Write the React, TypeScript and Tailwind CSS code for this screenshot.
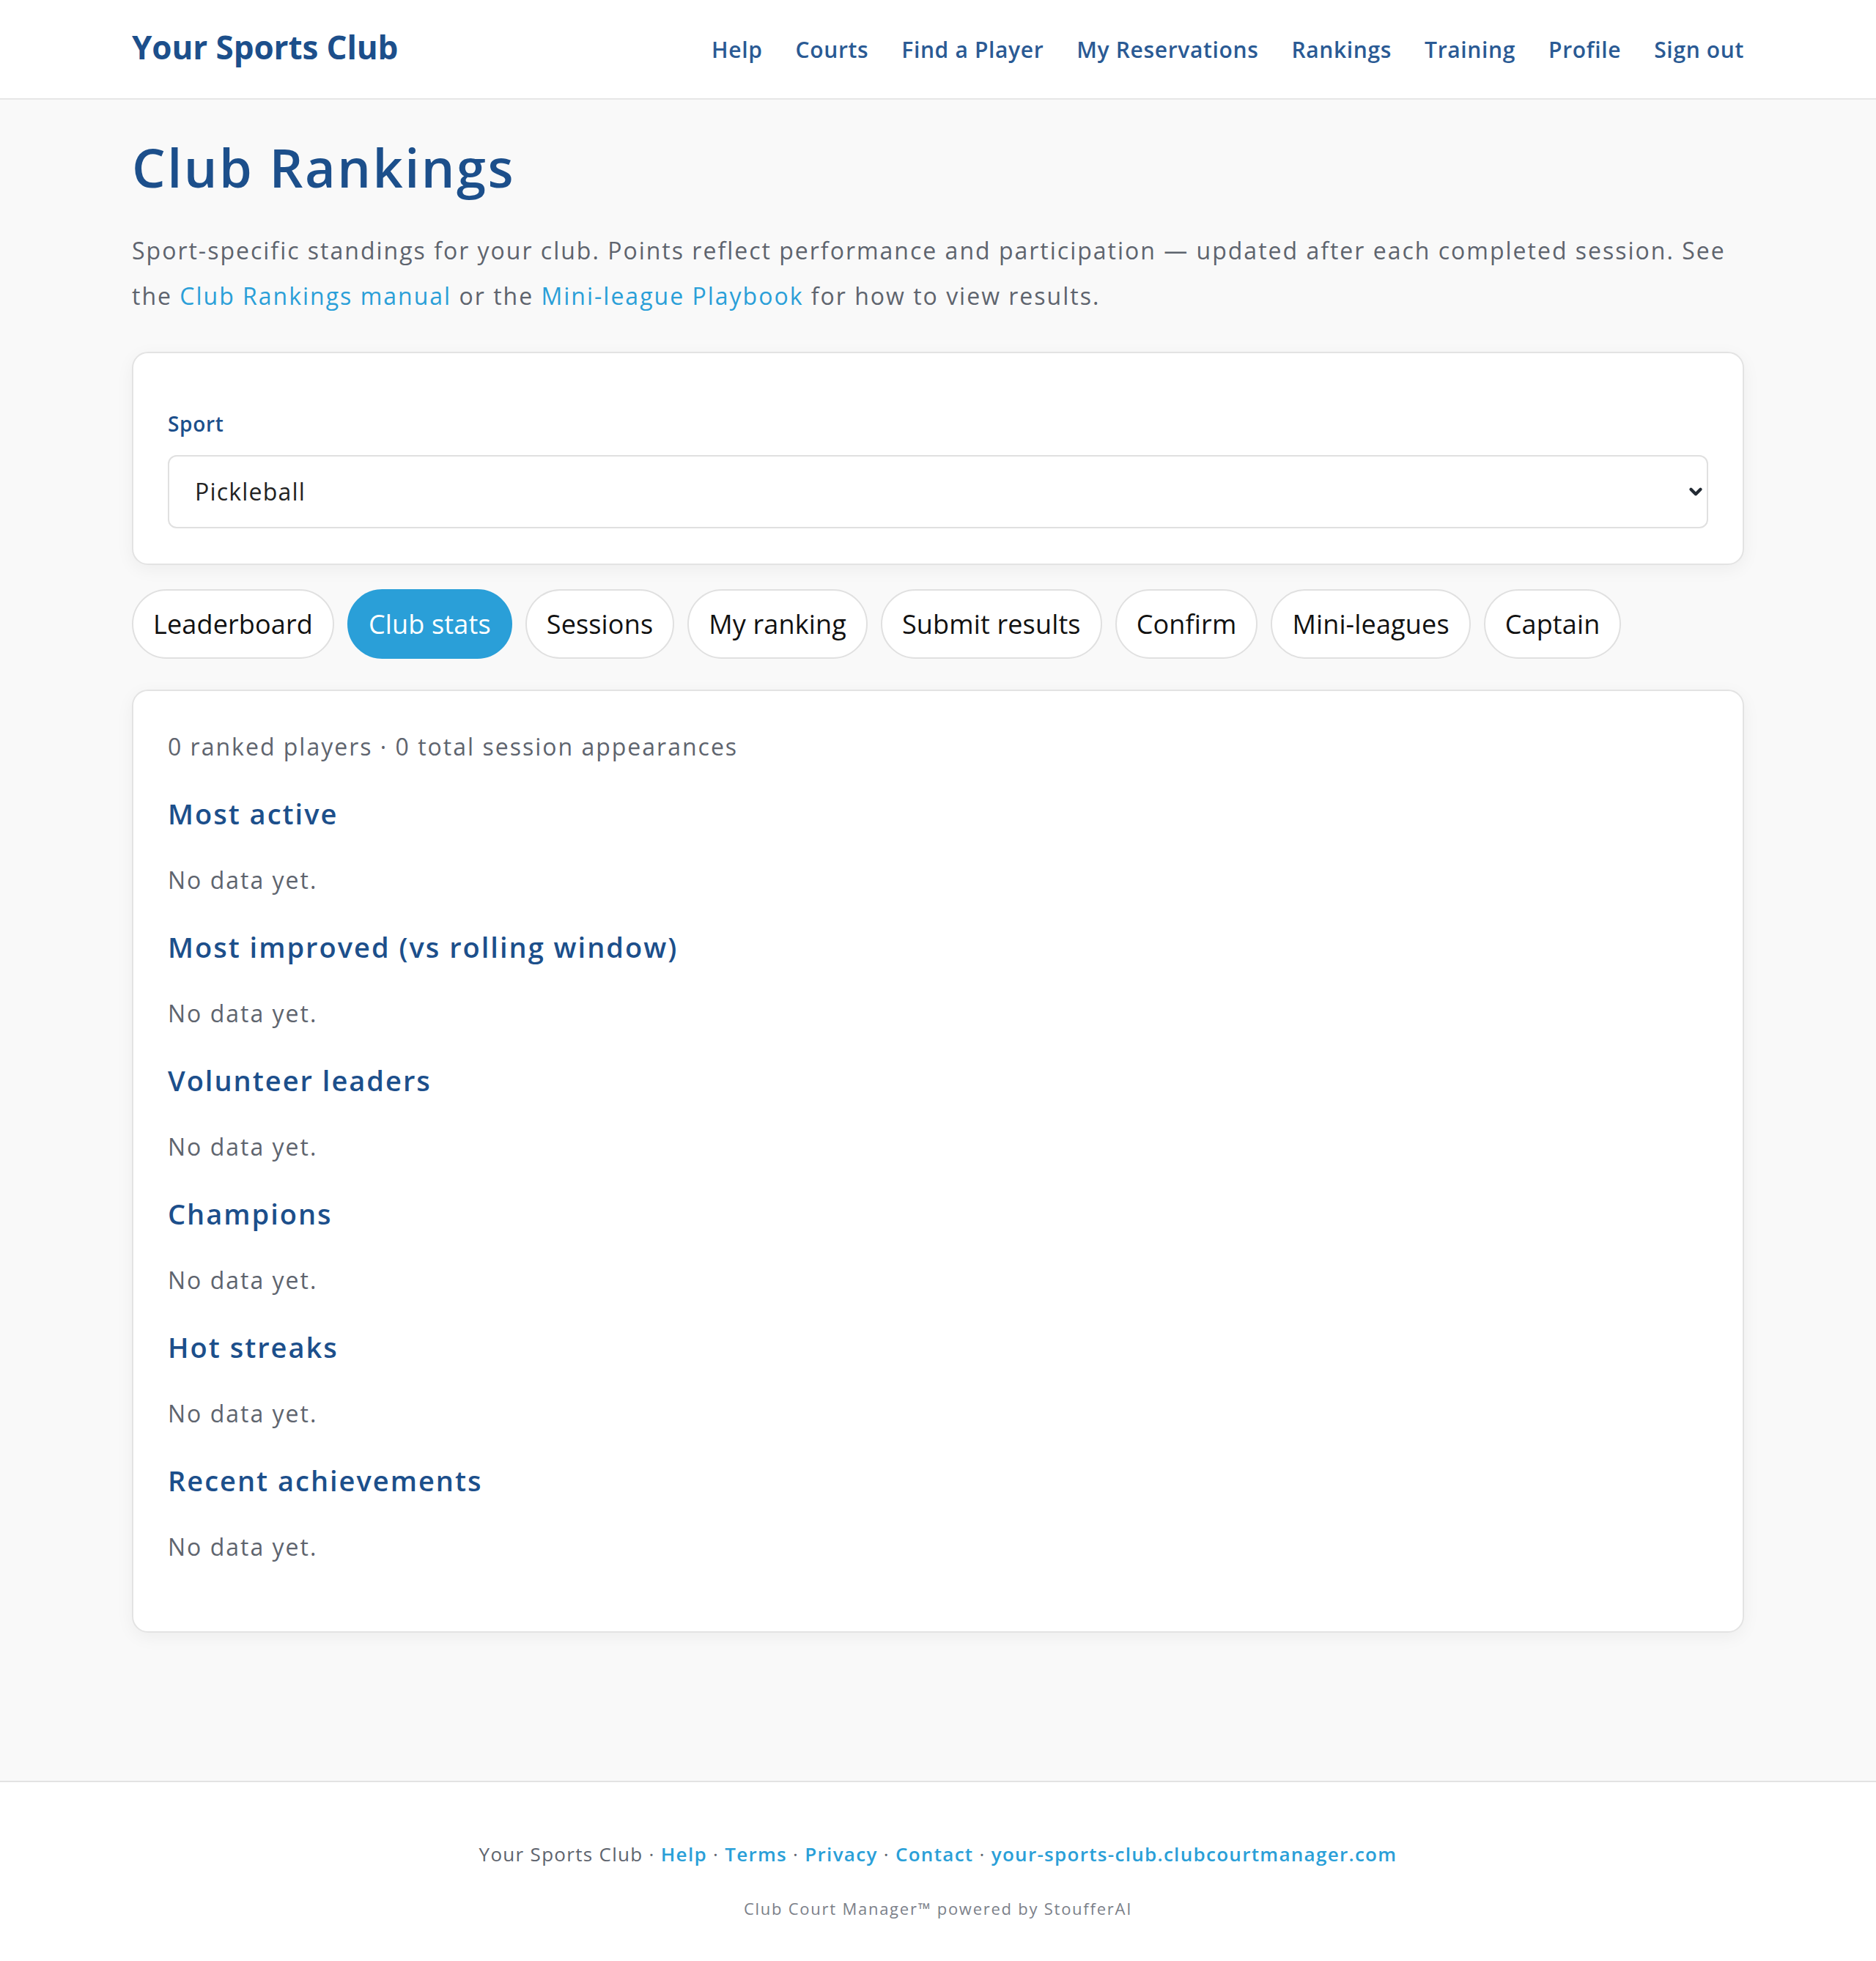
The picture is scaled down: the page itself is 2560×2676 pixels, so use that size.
import { ChevronDown } from "lucide-react";

const navLinks = ["Help", "Courts", "Find a Player", "My Reservations", "Rankings", "Training", "Profile", "Sign out"];

const tabs = ["Leaderboard", "Club stats", "Sessions", "My ranking", "Submit results", "Confirm", "Mini-leagues", "Captain"];

const statSections = [
  "Most active",
  "Most improved (vs rolling window)",
  "Volunteer leaders",
  "Champions",
  "Hot streaks",
  "Recent achievements",
];

const footerLinks = ["Help", "Terms", "Privacy", "Contact", "your-sports-club.clubcourtmanager.com"];

const ClubRankings = () => {
  const activeTab = "Club stats";

  return (
    <div className="min-h-screen bg-[#f9f9f9] font-['Open_Sans','Noto_Sans',sans-serif]">
      {/* Top bar */}
      <header className="h-[136px] border-b-2 border-[#e6e6e6] bg-white">
        <div className="mx-auto flex h-full max-w-[2200px] items-center justify-between">
          <a href="#" className="-mt-[6px] text-[44px] font-bold tracking-[-0.1px] text-[#1c4f8b]">
            Your Sports Club
          </a>
          <nav className="flex items-center gap-[45px] text-[30px] font-semibold tracking-[0.65px] text-[#2a5a94]">
            {navLinks.map((link) => (
              <a key={link} href="#">
                {link}
              </a>
            ))}
          </nav>
        </div>
      </header>

      <main className="mx-auto max-w-[2200px] pt-[49px] pb-[202px]">
        <h1 className="text-[72px] leading-[86px] font-semibold tracking-[2.5px] text-[#1c4f8b]">Club Rankings</h1>
        <p className="mt-[40px] text-[32px] leading-[62px] tracking-[2px] text-[#5e646e]">
          Sport-specific standings for your club. Points reflect performance and participation — updated after each
          completed session. See the{" "}
          <a href="#" className="text-[#2a9fd8]">
            Club Rankings manual
          </a>{" "}
          or the{" "}
          <a href="#" className="text-[#2a9fd8]">
            Mini-league Playbook
          </a>{" "}
          for how to view results.
        </p>

        {/* Sport picker */}
        <div className="mt-[45px] rounded-[22px] border-2 border-[#e3e3e3] bg-white px-[47px] pt-[76px] pb-[48px] shadow-[0_6px_24px_rgba(0,0,0,0.05)]">
          <label className="block text-[28px] leading-[40px] font-semibold tracking-[0.7px] text-[#1c4f8b]">Sport</label>
          <div className="relative mt-[23px]">
            <select
              defaultValue="pickleball"
              className="h-[100px] w-full appearance-none rounded-[12px] border-2 border-[#e0e0e0] bg-white pl-[35px] font-['Open_Sans','Noto_Sans',sans-serif] text-[32px] tracking-[1.2px] text-[#222222] outline-none"
            >
              <option value="pickleball">Pickleball</option>
              <option value="tennis">Tennis</option>
            </select>
            <ChevronDown
              className="pointer-events-none absolute top-1/2 right-[4px] h-[26px] w-[26px] -translate-y-1/2 text-[#222a33]"
              strokeWidth={4}
            />
          </div>
        </div>

        {/* Section tabs */}
        <div className="mt-[33px] flex gap-[18px]">
          {tabs.map((tab) => (
            <button
              key={tab}
              className={
                tab === activeTab
                  ? "flex h-[95px] items-center rounded-full border-2 border-[#2a9fd8] bg-[#2a9fd8] px-[27px] text-[36px] tracking-[0.15px] text-white"
                  : "flex h-[95px] items-center rounded-full border-2 border-[#e0e0e0] bg-white px-[27px] text-[36px] tracking-[0.15px] text-[#111111]"
              }
            >
              {tab}
            </button>
          ))}
        </div>

        {/* Club stats */}
        <div className="mt-[42px] flex flex-col gap-[43px] rounded-[22px] border-2 border-[#e3e3e3] bg-white px-[47px] pt-[52px] pb-[91px] shadow-[0_6px_24px_rgba(0,0,0,0.05)]">
          <p className="text-[32px] leading-[48px] tracking-[2px] text-[#5e646e]">
            0 ranked players · 0 total session appearances
          </p>
          {statSections.map((section) => (
            <div key={section} className="flex flex-col gap-[43px]">
              <h3 className="text-[38px] leading-[48px] font-semibold tracking-[2px] text-[#1c4f8b]">{section}</h3>
              <p className="text-[32px] leading-[48px] tracking-[2px] text-[#5e646e]">No data yet.</p>
            </div>
          ))}
        </div>
      </main>

      <footer className="border-t-2 border-[#e3e3e3] bg-white pt-[78px] pb-[55px] text-center">
        <p className="text-[26px] leading-[40px] tracking-[1.3px] text-[#5e646e]">
          Your Sports Club
          {footerLinks.map((link) => (
            <span key={link}>
              {" · "}
              <a href="#" className="font-semibold text-[#2a9fd8]">
                {link}
              </a>
            </span>
          ))}
        </p>
        <p className="mt-[37px] text-[22px] leading-[34px] tracking-[1.75px] text-[#7b8089]">
          Club Court Manager™ powered by StoufferAI
        </p>
      </footer>
    </div>
  );
};

export default ClubRankings;
